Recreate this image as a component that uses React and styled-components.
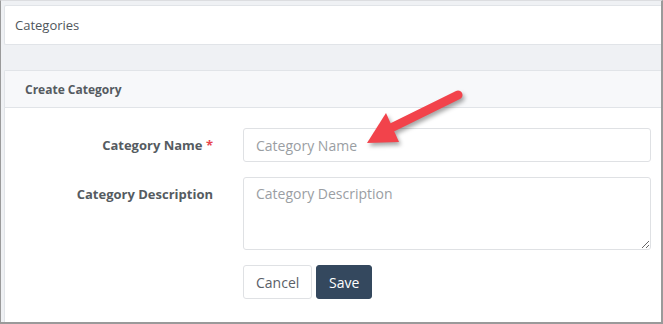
import styled, { createGlobalStyle } from 'styled-components';

const GlobalStyle = createGlobalStyle`
  html, body {
    margin: 0;
    padding: 0;
    background: #ffffff;
  }
  * {
    box-sizing: border-box;
  }
`;

const Frame = styled.div`
  position: relative;
  width: 663px;
  height: 324px;
  overflow: hidden;
  background: #eff1f4;
  border-top: 1px solid #dcdde0;
  border-left: 1px solid #9a9a9a;
  border-right: 2px solid #9a9a9a;
  border-bottom: 2px solid #9a9a9a;
  padding: 4px 0 0 3px;
  font-family: "Open Sans", "Liberation Sans", sans-serif;
  color: #555b61;
`;

const TitleBar = styled.div`
  display: flex;
  align-items: center;
  height: 40px;
  padding: 0 10px;
  background: #ffffff;
  border: 1px solid #e1e4e8;
  border-right: none;
  border-radius: 2px 0 0 2px;
  font-size: 13px;
  color: #50565c;
`;

const Card = styled.section`
  margin-top: 25px;
  background: #ffffff;
  border: 1px solid #e1e4e8;
  border-right: none;
  border-bottom: none;
  border-radius: 2px 0 0 0;
  height: 252px;
`;

const CardHeader = styled.header`
  display: flex;
  align-items: center;
  height: 37px;
  padding: 0 20px;
  background: #f7f8fa;
  border-bottom: 1px solid #e1e4e8;
  font-size: 12px;
  font-weight: 700;
  color: #555b61;
`;

const CardBody = styled.div`
  display: grid;
  grid-template-columns: 238px 1fr;
  row-gap: 15px;
  padding: 20px 10px 0 0;
`;

const Label = styled.label`
  text-align: right;
  padding: 8px 30px 0 0;
  line-height: 18px;
  font-size: 13px;
  font-weight: 700;
  color: #555b61;
`;

const Required = styled.span`
  color: #e8464e;
`;

const fieldStyles = `
  width: 100%;
  border: 1px solid #dfe1e4;
  border-radius: 3px;
  background: #ffffff;
  font-family: "Open Sans", "Liberation Sans", sans-serif;
  font-size: 14px;
  color: #555;
  padding: 0 12px;
  outline: none;
  &::placeholder {
    color: #9a9ea3;
  }
`;

const TextInput = styled.input`
  ${fieldStyles}
  height: 34px;
`;

const TextArea = styled.textarea`
  ${fieldStyles}
  display: block;
  height: 73px;
  padding-top: 6px;
  line-height: 20px;
  resize: vertical;
`;

const Actions = styled.div`
  display: flex;
  gap: 4px;
`;

const Button = styled.button`
  height: 34px;
  padding: 0 12px;
  border-radius: 3px;
  font-family: "Open Sans", "Liberation Sans", sans-serif;
  font-size: 14px;
  cursor: pointer;
  border: 1px solid ${(p) => (p.$primary ? '#34485e' : '#dfe1e4')};
  background: ${(p) => (p.$primary ? '#34485e' : '#ffffff')};
  color: ${(p) => (p.$primary ? '#ffffff' : '#5a6067')};
  width: ${(p) => (p.$primary ? '56px' : '69px')};
`;

const Arrow = styled.svg`
  position: absolute;
  left: 0;
  top: 0;
  pointer-events: none;
  filter: drop-shadow(2px 3px 2px rgba(0, 0, 0, 0.35));
`;

function PointerArrow() {
  return (
    <Arrow width="663" height="324" viewBox="0 0 663 324">
      <line x1="457" y1="94" x2="392" y2="126" stroke="#f2434b" strokeWidth="9" strokeLinecap="round" />
      <polygon points="366,142 385,112 398,141" fill="#f2434b" />
    </Arrow>
  );
}

export default function App() {
  return (
    <>
      <GlobalStyle />
      <Frame>
        <TitleBar>Categories</TitleBar>
        <Card>
          <CardHeader>Create Category</CardHeader>
          <CardBody>
            <Label htmlFor="cat-name">
              Category Name <Required>*</Required>
            </Label>
            <TextInput id="cat-name" placeholder="Category Name" />
            <Label htmlFor="cat-desc">Category Description</Label>
            <TextArea id="cat-desc" placeholder="Category Description" />
            <span />
            <Actions>
              <Button type="button">Cancel</Button>
              <Button type="submit" $primary>Save</Button>
            </Actions>
          </CardBody>
        </Card>
        <PointerArrow />
      </Frame>
    </>
  );
}
